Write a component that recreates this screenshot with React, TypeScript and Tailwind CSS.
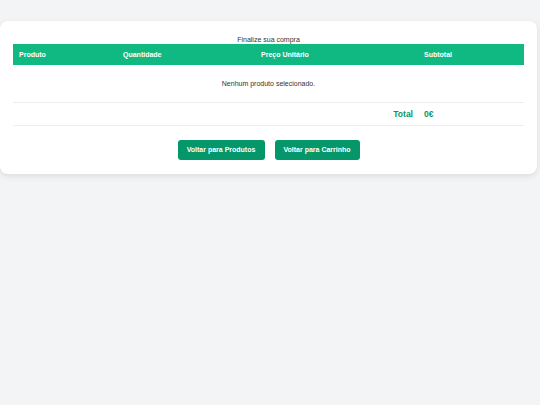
export default function App() {
  return (
    <div className="min-h-[405px] w-[540px] bg-[#f3f4f6] pt-[21px]" style={{ fontFamily: '"Liberation Sans", Arial, sans-serif' }}>
      <div className="w-[537px] rounded-[8px] bg-white px-[13px] pt-[14px] pb-[14px] shadow-[0_2px_6px_rgba(0,0,0,0.1)]">
        <h2 className="text-center text-[7px] leading-[9px] text-[#333]">Finalize sua compra</h2>
        <div className="grid h-[21px] grid-cols-[104px_138px_163px_109px] items-center bg-[#10b981] pt-[1px] text-[7px] font-bold text-white">
          <div className="px-[6px]">Produto</div>
          <div className="px-[6px]">Quantidade</div>
          <div className="px-[6px]">Preço Unitário</div>
          <div className="px-[6px]">Subtotal</div>
        </div>
        <div className="flex h-[38px] items-center justify-center border-b border-[#eeeeee] pt-[2px] text-[7px] text-[#333]">
          Nenhum produto selecionado.
        </div>
        <div className="grid h-[23px] grid-cols-[104px_138px_163px_109px] items-center border-b border-[#eeeeee] pt-[1px] text-[8.5px] font-bold text-[#059669]">
          <div></div>
          <div></div>
          <div className="px-[5px] text-right">Total</div>
          <div className="px-[6px]">0€</div>
        </div>
        <div className="mt-[14px] flex justify-center gap-[10px]">
          <button className="h-[20px] w-[87px] rounded-[3px] bg-[#059669] text-[7px] font-bold text-white">Voltar para Produtos</button>
          <button className="h-[20px] w-[85px] rounded-[3px] bg-[#059669] text-[7px] font-bold text-white">Voltar para Carrinho</button>
        </div>
      </div>
    </div>
  );
}
